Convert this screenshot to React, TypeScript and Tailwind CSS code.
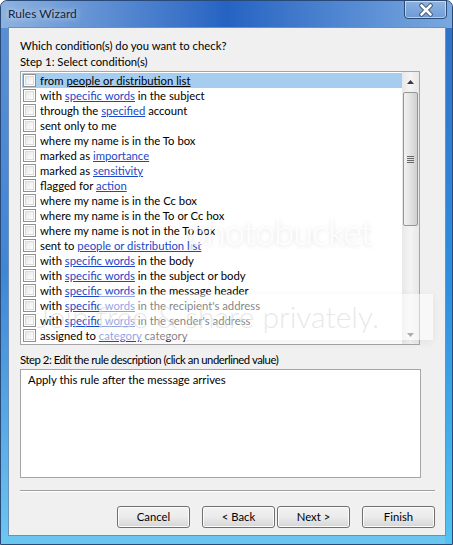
import React from "react";

type Part = { t: string; link?: boolean };
const rows: Part[][] = [
  [{ t: "from " }, { t: "people or distribution list", link: true }],
  [{ t: "with " }, { t: "specific words", link: true }, { t: " in the subject" }],
  [{ t: "through the " }, { t: "specified", link: true }, { t: " account" }],
  [{ t: "sent only to me" }],
  [{ t: "where my name is in the To box" }],
  [{ t: "marked as " }, { t: "importance", link: true }],
  [{ t: "marked as " }, { t: "sensitivity", link: true }],
  [{ t: "flagged for " }, { t: "action", link: true }],
  [{ t: "where my name is in the Cc box" }],
  [{ t: "where my name is in the To or Cc box" }],
  [{ t: "where my name is not in the To box" }],
  [{ t: "sent to " }, { t: "people or distribution list", link: true }],
  [{ t: "with " }, { t: "specific words", link: true }, { t: " in the body" }],
  [{ t: "with " }, { t: "specific words", link: true }, { t: " in the subject or body" }],
  [{ t: "with " }, { t: "specific words", link: true }, { t: " in the message header" }],
  [{ t: "with " }, { t: "specific words", link: true }, { t: " in the recipient's address" }],
  [{ t: "with " }, { t: "specific words", link: true }, { t: " in the sender's address" }],
  [{ t: "assigned to " }, { t: "category", link: true }, { t: " category" }],
];

const font = { fontFamily: '"Segoe UI", Lato, "Open Sans", sans-serif' };

function Checkbox() {
  return (
    <div className="w-[13px] h-[13px] shrink-0 border border-[#8e8f8f] bg-white p-[1px]">
      <div className="w-full h-full border border-[#dcdcdc] bg-gradient-to-br from-[#e6e6e6] to-white" />
    </div>
  );
}

function Button({ label }: { label: string }) {
  return (
    <button className="w-[73px] h-[22px] rounded-[3px] border border-[#707070] bg-gradient-to-b from-[#f2f2f2] via-[#ebebeb] to-[#d5d5d5] text-[11.3px] text-black flex items-center justify-center shadow-[inset_0_0_0_1px_#fcfcfc]">
      {label}
    </button>
  );
}

export default function App() {
  return (
    <div className="w-[453px] h-[545px] overflow-hidden bg-white" style={font}>
      <div className="relative w-[453px] h-[545px] rounded-t-[7px] border border-[#294a78] bg-gradient-to-b from-[#5b8fd2] via-[#3f86d6] to-[#6cc7f0] flex flex-col">
        {/* title bar glass */}
        <div className="absolute left-0 right-0 top-0 h-[27px] rounded-t-[6px] bg-gradient-to-r from-[#8db2df] via-[#2563c2] to-[#7aa9df]" />
        <div className="absolute right-0 top-[27px] bottom-0 w-[7px] bg-gradient-to-b from-[#2f73c9] via-[#2e8fe0] to-[#53c3f0]" />
        <div className="relative h-[26px] flex items-center pl-[7px]">
          <span className="text-[12px] text-[#15233a] [text-shadow:0_0_6px_rgba(255,255,255,0.9)]">
            Rules Wizard
          </span>
        </div>
        {/* close button */}
        <div className="absolute top-[-1px] left-[403px] w-[43px] h-[19px] rounded-b-[4px] border border-[#2c4a72] bg-gradient-to-b from-[#a3bfe2]/60 to-[#6a98d4]/60 shadow-[inset_0_0_0_1px_rgba(255,255,255,0.5)] flex items-center justify-center">
          <svg width="16" height="14" viewBox="0 0 16 14">
            <path d="M3.5 2.5 L12.5 11.5 M12.5 2.5 L3.5 11.5" stroke="#39506f" strokeWidth="4.5" strokeLinecap="round" />
            <path d="M3.5 2.5 L12.5 11.5 M12.5 2.5 L3.5 11.5" stroke="#ffffff" strokeWidth="2.6" strokeLinecap="round" />
          </svg>
        </div>

        {/* client area */}
        <div className="relative ml-[7px] mr-[6px] h-[509px] border border-[#6f8fb9] bg-[#f0f0f0] text-[11.3px] text-black">
          <div className="pl-[11px] pt-[10px]">
            <div className="h-[16px] leading-[16px]">Which condition(s) do you want to check?</div>
            <div className="h-[16px] leading-[16px]">Step 1: Select condition(s)</div>
          </div>

          {/* list box */}
          <div className="relative ml-[11px] mt-[1px] w-[400px] h-[274px] border border-[#a5a5a5] bg-white flex overflow-hidden">
            <div className="flex-1 pt-[1px] pl-[1px] overflow-hidden">
              {rows.map((parts, i) => (
                <div
                  key={i}
                  className={`h-[15px] flex items-center gap-[4px] pl-[1px] whitespace-nowrap ${i === 0 ? "bg-[#a6cdf0]" : ""}`}
                >
                  <Checkbox />
                  <span className="leading-[15px]">
                    {parts.map((p, j) =>
                      p.link ? (
                        <span key={j} className={`underline ${i === 0 ? "text-black" : "text-[#1c47c9]"}`}>
                          {p.t}
                        </span>
                      ) : (
                        <span key={j}>{p.t}</span>
                      )
                    )}
                  </span>
                </div>
              ))}
            </div>
            {/* scrollbar */}
            <div className="w-[17px] h-full bg-gradient-to-r from-[#e8e8e8] via-[#f4f4f4] to-[#e8e8e8] flex flex-col items-center">
              <div className="h-[19px] w-full flex items-center justify-center">
                <svg width="7" height="4" viewBox="0 0 7 4">
                  <path d="M3.5 0 L7 4 L0 4 Z" fill="#3a3a3a" />
                </svg>
              </div>
              <div className="mt-[1px] w-[15px] h-[134px] rounded-[2px] border border-[#959595] bg-gradient-to-r from-[#f2f2f2] via-[#e2e2e2] to-[#cfcfcf] flex items-center justify-center">
                <div className="flex flex-col gap-[1px]">
                  <div className="w-[7px] h-[1px] bg-[#6a6a6a]" />
                  <div className="w-[7px] h-[1px] bg-[#6a6a6a]" />
                  <div className="w-[7px] h-[1px] bg-[#6a6a6a]" />
                  <div className="w-[7px] h-[1px] bg-[#6a6a6a]" />
                </div>
              </div>
              <div className="flex-1" />
              <div className="h-[19px] w-full flex items-center justify-center">
                <svg width="7" height="4" viewBox="0 0 7 4">
                  <path d="M0 0 L7 0 L3.5 4 Z" fill="#5a5a5a" />
                </svg>
              </div>
            </div>
          </div>

          <div className="pl-[11px] mt-[7px] h-[16px] leading-[16px] tracking-[-0.45px]">
            Step 2: Edit the rule description (click an underlined value)
          </div>
          <div className="ml-[11px] mt-[1px] w-[401px] h-[109px] border border-[#a5a5a5] bg-white px-[7px] pt-[2px] leading-[16px]">
            Apply this rule after the message arrives
          </div>

          <div className="ml-[11px] mt-[12px] w-[415px] h-[2px] border-t border-[#a0a0a0] border-b border-b-white" />

          <div className="mt-[14px] flex pl-[108px]">
            <Button label="Cancel" />
            <div className="ml-[12px]">
              <Button label="< Back" />
            </div>
            <div className="ml-[2px]">
              <Button label="Next >" />
            </div>
            <div className="ml-[12px]">
              <Button label="Finish" />
            </div>
          </div>

          {/* photobucket watermark overlay */}
          <div className="pointer-events-none absolute left-[178px] top-[176px] text-[36px] font-light text-white/90 tracking-tight [text-shadow:0_1px_5px_rgba(0,0,0,0.14)] whitespace-nowrap" style={{ fontFamily: "Lato, sans-serif" }}>
            photobucket
          </div>
          <div className="pointer-events-none absolute left-[90px] top-[266px] w-[334px] h-[46px] bg-white/50 shadow-[0_2px_8px_rgba(0,0,0,0.06)]" />
          <div className="pointer-events-none absolute right-[66px] top-[266px] text-[30px] font-light text-[#d8d8d8]/60 whitespace-nowrap" style={{ fontFamily: "Lato, sans-serif" }}>
            Join free &amp; share privately.
          </div>
        </div>
      </div>
    </div>
  );
}
